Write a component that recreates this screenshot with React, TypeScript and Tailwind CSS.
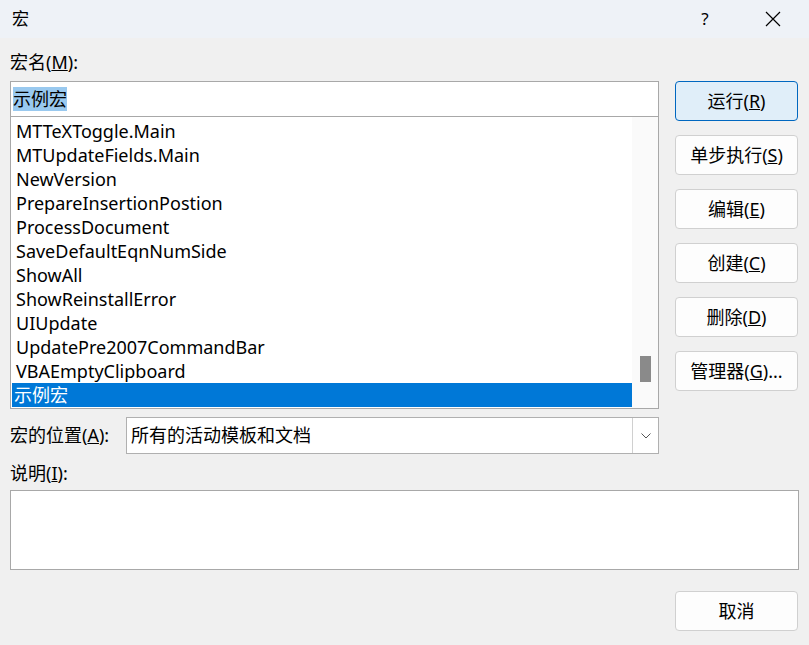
import React from "react";

const items = [
  "MTTeXToggle.Main",
  "MTUpdateFields.Main",
  "NewVersion",
  "PrepareInsertionPostion",
  "ProcessDocument",
  "SaveDefaultEqnNumSide",
  "ShowAll",
  "ShowReinstallError",
  "UIUpdate",
  "UpdatePre2007CommandBar",
  "VBAEmptyClipboard",
];

function Btn({ children, focused = false }: { children: React.ReactNode; focused?: boolean }) {
  return (
    <div
      className={
        "h-[40px] w-[123px] rounded-[4px] border flex items-center justify-center text-[18px] text-black " +
        (focused ? "bg-[#e0eef9] border-[#0067c0]" : "bg-[#fdfdfd] border-[#d0d0d0]")
      }
    >
      {children}
    </div>
  );
}

export default function App() {
  return (
    <div
      className="w-[809px] h-[645px] bg-[#f0f0f0] flex flex-col overflow-hidden"
      style={{ fontFamily: '"Noto Sans", "Noto Sans CJK SC", sans-serif' }}
    >
      <div className="h-[38px] bg-[#eef2f7] flex items-center pl-[12px] text-[17px] text-black">
        <span className="flex-1">宏</span>
        <span className="w-[24px] text-center mr-[48px] text-[17px]">?</span>
        <svg width="16" height="16" viewBox="0 0 16 16" className="mr-[28px]">
          <path d="M1 1 L15 15 M15 1 L1 15" stroke="#000" strokeWidth="1.2" />
        </svg>
      </div>
      <div className="flex-1 flex flex-col px-[10px]">
        <div className="flex gap-[16px]">
          <div className="w-[649px] flex flex-col">
            <div className="h-[43px] flex items-center text-[18px] pt-[6px]">
              宏名(<span className="underline">M</span>):
            </div>
            <div className="h-[36px] bg-white border border-[#a8a8a8] flex items-center pl-[2px]">
              <span className="bg-[#99c9ef] text-[18px] leading-[24px]">示例宏</span>
            </div>
            <div className="h-[292px] bg-white border border-[#a8a8a8] border-t-0 flex">
              <div className="flex-1 flex flex-col pt-[2px] pl-[1px]">
                {items.map((t) => (
                  <div key={t} className="h-[24px] leading-[24px] pl-[4px] text-[18px] text-black">
                    {t}
                  </div>
                ))}
                <div className="h-[24px] leading-[24px] pl-[2px] text-[18px] bg-[#0078d7] text-white">
                  示例宏
                </div>
              </div>
              <div className="w-[26px] bg-[#fafafa] flex flex-col items-center justify-end pb-[26px]">
                <div className="w-[11px] h-[26px] bg-[#8a8a8a]" />
              </div>
            </div>
          </div>
          <div className="flex flex-col gap-[14px] pt-[43px]">
            <Btn focused>
              运行(<span className="underline">R</span>)
            </Btn>
            <Btn>
              单步执行(<span className="underline">S</span>)
            </Btn>
            <Btn>
              编辑(<span className="underline">E</span>)
            </Btn>
            <Btn>
              创建(<span className="underline">C</span>)
            </Btn>
            <Btn>
              删除(<span className="underline">D</span>)
            </Btn>
            <Btn>
              管理器(<span className="underline">G</span>)...
            </Btn>
          </div>
        </div>
        <div className="flex items-center mt-[8px] w-[649px]">
          <div className="w-[116px] text-[18px]">
            宏的位置(<span className="underline">A</span>):
          </div>
          <div className="flex-1 h-[37px] bg-white border border-[#b0b0b0] flex items-center">
            <span className="flex-1 pl-[4px] text-[18px]">所有的活动模板和文档</span>
            <div className="w-[26px] h-full border-l border-[#d0d0d0] flex items-center justify-center">
              <svg width="10" height="6" viewBox="0 0 10 6">
                <path d="M0.5 0.5 L5 5 L9.5 0.5" fill="none" stroke="#555" strokeWidth="1" />
              </svg>
            </div>
          </div>
        </div>
        <div className="h-[36px] flex items-center text-[18px] pt-[3px]">
          说明(<span className="underline">I</span>):
        </div>
        <div className="w-[789px] h-[80px] bg-white border border-[#a8a8a8]" />
        <div className="flex justify-end mt-[21px] pr-[1px]">
          <Btn>取消</Btn>
        </div>
      </div>
    </div>
  );
}
